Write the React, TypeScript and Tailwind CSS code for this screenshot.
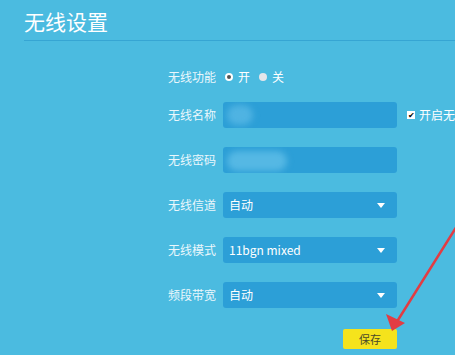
import React from "react";

const font = { fontFamily: '"Noto Sans CJK SC", "Liberation Sans", sans-serif' };

function Label({ children }: { children: React.ReactNode }) {
  return <div className="w-[55px] shrink-0 text-[12px] text-[#eaf7fc]">{children}</div>;
}

function Select({ value }: { value: string }) {
  return (
    <div className="flex h-[26px] w-[174px] shrink-0 items-center justify-between rounded-[3px] bg-[#2c9fd7] pl-[6px] pr-[12px] text-[12px] text-white">
      <span>{value}</span>
      <span className="h-0 w-0 border-x-[4px] border-t-[5px] border-x-transparent border-t-white" />
    </div>
  );
}

function BlurInput({ wide }: { wide?: boolean }) {
  return (
    <div className="relative h-[26px] w-[174px] shrink-0 overflow-hidden rounded-[3px] bg-[#2c9fd7]">
      {wide ? (
        <div className="absolute left-[4px] top-[4px] h-[20px] w-[60px] rounded-full bg-[#55b8e4] blur-[3px]" />
      ) : (
        <div className="absolute left-[4px] top-[3px] h-[20px] w-[26px] rounded-full bg-[#4fb3e2] blur-[3px]" />
      )}
    </div>
  );
}

export default function App() {
  return (
    <div className="relative h-[355px] w-[455px] overflow-hidden bg-[#4bbbe0]" style={font}>
      <div className="ml-6 h-[41px] border-b border-[#36a5d3]">
        <div className="pt-[7px] text-[21px] leading-[28px] text-white">无线设置</div>
      </div>

      <div className="pl-[168px] pt-[23px]">
        <div className="flex h-[26px] items-center">
          <Label>无线功能</Label>
          <div className="flex items-center text-[12px] text-white">
            <span className="ml-[2px] flex h-[8px] w-[8px] items-center justify-center rounded-full bg-white">
              <span className="h-[4px] w-[4px] rounded-full bg-[#555]" />
            </span>
            <span className="ml-[5px]">开</span>
            <span className="ml-[9px] h-[8px] w-[8px] rounded-full bg-[#e6e6ea]" />
            <span className="ml-[5px]">关</span>
          </div>
        </div>

        <div className="mt-[12px] flex h-[26px] items-center">
          <Label>无线名称</Label>
          <BlurInput />
          <div className="ml-[10px] flex shrink-0 items-center whitespace-nowrap text-[12px] text-white">
            <span className="flex h-[8px] w-[8px] items-center justify-center bg-white text-[8px] leading-none text-black">✔</span>
            <span className="ml-[4px]">开启无线广播</span>
          </div>
        </div>

        <div className="mt-[19px] flex h-[26px] items-center">
          <Label>无线密码</Label>
          <BlurInput wide />
        </div>

        <div className="mt-[19px] flex h-[26px] items-center">
          <Label>无线信道</Label>
          <Select value="自动" />
        </div>

        <div className="mt-[19px] flex h-[26px] items-center">
          <Label>无线模式</Label>
          <Select value="11bgn mixed" />
        </div>

        <div className="mt-[19px] flex h-[26px] items-center">
          <Label>频段带宽</Label>
          <Select value="自动" />
        </div>

        <div className="ml-[175px] mt-[21px] flex h-[20px] w-[54px] items-center justify-center rounded-[2px] bg-[#f5e31c] text-[11px] text-[#4a4a2a]">
          保存
        </div>
      </div>

      <svg className="absolute left-0 top-0" width="455" height="355" viewBox="0 0 455 355">
        <line x1="457" y1="226" x2="398" y2="320" stroke="#e23c43" strokeWidth="2.5" strokeLinecap="round" />
        <polygon points="392,331 386,314 405,323" fill="#e23c43" />
      </svg>
    </div>
  );
}
